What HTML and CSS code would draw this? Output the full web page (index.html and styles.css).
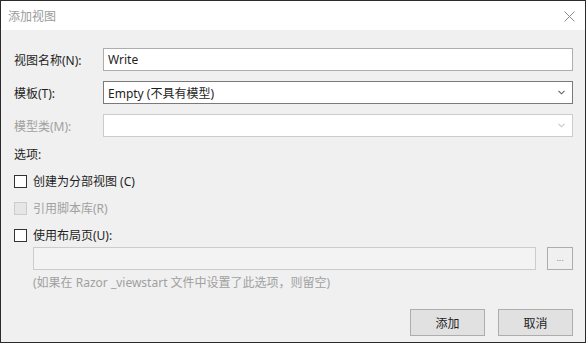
FILE: index.html
```html
<!DOCTYPE html>
<html lang="zh-CN">

<head>
    <meta charset="UTF-8">
    <title>添加视图</title>
    <link rel="stylesheet" href="styles.css">
</head>

<body>
    <div class="dialog">
        <!-- Заголовок окна -->
        <div class="titlebar">
            <span class="title">添加视图</span>
            <span class="close">
                <svg width="11" height="11" viewBox="0 0 11 11">
                    <path d="M0.5 0.5L10.5 10.5M10.5 0.5L0.5 10.5" stroke="#8a8a8a" stroke-width="1" fill="none"/>
                </svg>
            </span>
        </div>

        <div class="content">
            <div class="fields">
                <label class="field-label">视图名称(N):</label>
                <div class="input">Write</div>

                <label class="field-label">模板(T):</label>
                <div class="input select">
                    <span>Empty (不具有模型)</span>
                    <svg class="chevron" width="7" height="5" viewBox="0 0 7 5">
                        <path d="M0.5 0.8L3.5 3.8L6.5 0.8" stroke="#606060" stroke-width="1.1" fill="none"/>
                    </svg>
                </div>

                <label class="field-label disabled">模型类(M):</label>
                <div class="input select disabled">
                    <span></span>
                    <svg class="chevron" width="7" height="5" viewBox="0 0 7 5">
                        <path d="M0.5 0.8L3.5 3.8L6.5 0.8" stroke="#c4c4c4" stroke-width="1.1" fill="none"/>
                    </svg>
                </div>
            </div>

            <div class="options-label">选项:</div>

            <div class="check-row">
                <span class="box"></span>
                <span>创建为分部视图 (C)</span>
            </div>
            <div class="check-row disabled">
                <span class="box"></span>
                <span>引用脚本库(R)</span>
            </div>
            <div class="check-row">
                <span class="box"></span>
                <span>使用布局页(U):</span>
            </div>

            <div class="layout-row">
                <div class="input disabled wide"></div>
                <button class="browse">...</button>
            </div>
            <div class="hint">(如果在 Razor _viewstart 文件中设置了此选项，则留空)</div>

            <div class="actions">
                <button class="btn">添加</button>
                <button class="btn">取消</button>
            </div>
        </div>
    </div>
</body>

</html>
```

FILE: styles.css
```css
/* Общие стили */
body {
    margin: 0;
    padding: 0;
    background-color: #2b2b2b;
    font-family: "Noto Sans", "Noto Sans CJK SC", sans-serif;
    font-size: 12px;
    color: #1e1e1e;
}

.dialog {
    width: 584px;
    height: 341px;
    border: 1px solid #2b2b2b;
    background-color: #f0f0f0;
    display: flex;
    flex-direction: column;
}

/* Заголовок */
.titlebar {
    height: 29px;
    background-color: #fff;
    display: flex;
    align-items: center;
    justify-content: space-between;
    padding: 0 10px 0 7px;
}

.title {
    color: #9a9a9a;
    font-size: 12px;
}

.close {
    display: flex;
    margin-top: 1px;
}

/* Контент */
.content {
    padding: 18px 12px 0 12px;
    display: flex;
    flex-direction: column;
}

.fields {
    display: grid;
    grid-template-columns: 90px 1fr;
    row-gap: 10px;
    align-items: center;
}

.field-label {
    padding-left: 1px;
}

.disabled {
    color: #a0a0a0;
}

.input {
    height: 21px;
    border: 1px solid #adadad;
    background-color: #fff;
    display: flex;
    align-items: center;
    padding: 0 4px;
}

.select {
    border-color: #7a7a7a;
    justify-content: space-between;
    padding-right: 7px;
}

.input.disabled {
    border-color: #cccccc;
}

.input.wide {
    flex: 1;
    background-color: #f3f3f3;
}

.options-label {
    margin-top: 9px;
    height: 18px;
    line-height: 18px;
    padding-left: 1px;
}

/* Флажки */
.check-row {
    display: flex;
    align-items: center;
    gap: 6px;
    height: 20px;
    margin-top: 7px;
    padding-left: 1px;
}

.box {
    width: 11px;
    height: 11px;
    border: 1px solid #333;
    background-color: #fff;
}

.check-row.disabled .box {
    border-color: #cccccc;
    background-color: #e6e6e6;
}

.layout-row {
    display: flex;
    gap: 11px;
    margin-top: 2px;
    padding-left: 20px;
}

.browse {
    width: 26px;
    height: 23px;
    border: 1px solid #adadad;
    background-color: #f0f0f0;
    color: #8a8a8a;
    font-size: 9px;
    padding: 0 0 3px 0;
    font-family: "Noto Sans", sans-serif;
}

.hint {
    margin-top: 5px;
    padding-left: 20px;
    height: 16px;
    line-height: 16px;
    color: #a0a0a0;
}

/* Кнопки */
.actions {
    display: flex;
    justify-content: flex-end;
    gap: 13px;
    margin-top: 18px;
}

.btn {
    width: 75px;
    height: 27px;
    border: 1px solid #adadad;
    background-color: #e1e1e1;
    font-family: "Noto Sans CJK SC", sans-serif;
    font-size: 12px;
    color: #1e1e1e;
}
```
